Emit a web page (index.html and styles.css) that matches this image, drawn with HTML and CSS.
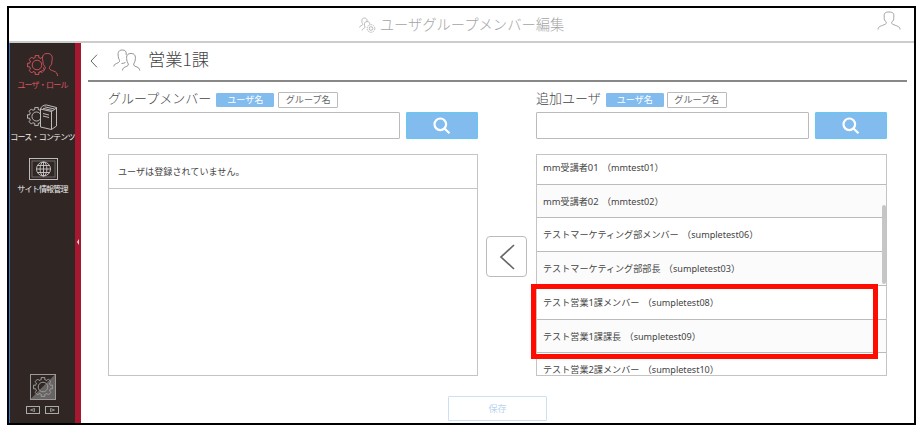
FILE: index.html
```html
<!DOCTYPE html>
<html lang="ja">
<head>
<meta charset="utf-8">
<title>ユーザグループメンバー編集</title>
<link rel="stylesheet" href="styles.css">
</head>
<body>
<svg class="defs" width="0" height="0">
  <symbol id="gear" viewBox="-10 -10 20 20"><path d="M7.400-1.700 9.410-1.900V1.900L7.400 1.700 6.500 4 8 5.300 5.300 8 4 6.500 1.700 7.400 1.900 9.410H-1.900L-1.700 7.400-4 6.500-5.300 8-8 5.300-6.500 4-7.400 1.700-9.410 1.900V-1.900L-7.400-1.700-6.500-4-8-5.300-5.300-8-4-6.500-1.700-7.400-1.900-9.410H1.900L1.700-7.400 4-6.500 5.300-8 8-5.300 6.500-4Z"/><circle r="4.800"/></symbol>
  <symbol id="person" viewBox="0 0 24 20"><path d="M1 18.500C1 15.500 3.500 15.300 7 13.800 9.600 12.800 10 12 8.700 10.400 7.600 10 7 8.200 7.300 6.500 6.500 2 8.500 1 12 1S17.500 2 16.700 6.500C17 8.200 16.400 10 15.300 10.400 14 12 14.400 12.800 17 13.800 20.500 15.300 23 15.500 23 18.500"/></symbol>
</svg>
<div class="app">
  <header class="top">
    <h1><svg class="top-icon" viewBox="0 0 17 16"><path d="M.5 10.500C.5 8.500 3.800 8.800 3.800 7.300 2.300 5 2.300 1 5.300 1S8.200 3.500 7.800 4.500M3 13.500C3 11.500 6.300 11.500 6 10 4.800 7 5.500 4.500 8 4.500S11 6 10.600 7.500"/><circle cx="12" cy="11.500" r="3.800" stroke-dasharray="1.700 .7"/><circle cx="12" cy="11.500" r="1.800"/></svg><span>ユーザグループメンバー編集</span></h1>
    <svg class="user" viewBox="0 0 24 20"><use href="#person"/></svg>
  </header>
  <div class="body">
    <nav class="side">
      <a class="item active"><svg width="32" height="26" viewBox="0 0 32 26"><use href="#gear" x="0" y="3" width="20" height="20"/><path class="cover" d="M13 24C14 20.500 19 19 18 17L15 12 15 5 20 1 26 7 25 15 24 18 30 24Z"/><path d="M12.500 20C16 18.500 19.500 17.500 18 14.500 16.500 13.500 15.800 12 16 9.500 14.800 5 15.500 1.500 20.300 1.500S26 5 24.800 9.500C25 12 24 13.500 22.700 14.500 21.700 17.500 23.500 18 26.500 19 29.500 20 30.500 21.500 30.500 24"/></svg><span>ユーザ・ロール</span></a>
      <a class="item"><svg width="32" height="26" viewBox="0 0 32 26"><use href="#gear" x="0" y="3" width="19" height="19"/><path class="cover" d="M13.500 5 18.500.8 30 2.800V21L25.500 25 13.500 25Z"/><path d="M13.500 5 24.500 7.500V25.500L13.500 23ZM24.500 7.500 29.500 4V22L24.500 25.500M13.500 5C14 2.500 17 .8 19.500 1L29.500 3.500V4M16 4.300 25.500 6.500M17.500 2.800 27.500 5M16 9.500 22 11M16 12 22 13.500"/></svg><span>コース・コンテンツ</span></a>
      <a class="item"><svg width="32" height="26" viewBox="0 0 32 26"><rect x="2.500" y="2.500" width="28" height="21"/><rect class="dim" x="5" y="5" width="23" height="16"/><circle cx="16.500" cy="13" r="7"/><ellipse cx="16.500" cy="13" rx="3.400" ry="7"/><path d="M16.500 6V20M9.500 13H23.500M10.500 9.500H22.500M10.500 16.500H22.500"/></svg><span>サイト情報管理</span></a>
      <div class="tools">
        <svg class="square" viewBox="0 0 26 26"><path class="half" d="M25.500 0V25.500H0Z"/><rect x=".5" y=".5" width="25" height="25"/><use href="#gear" x="3" y="3" width="20" height="20"/></svg>
        <div class="arrows">
          <svg viewBox="0 0 14 8"><rect x=".5" y=".5" width="13" height="7"/><path d="M8.500 2.500V5.500L4.500 4Z"/></svg>
          <svg viewBox="0 0 14 8"><rect x=".5" y=".5" width="13" height="7"/><path d="M5.500 2.500V5.500L9.500 4Z"/></svg>
        </div>
      </div>
    </nav>
    <div class="rail"><i></i></div>
    <main>
      <div class="heading">
        <svg class="back" viewBox="0 0 8 14"><path d="M7 .7 1 7 7 13.300"/></svg>
        <svg class="people" viewBox="0 0 28 23"><path d="M.7 17.500C.7 14.500 5.500 14.500 6.500 12.500 7 11 5.300 10 5.300 7.500 4.500 3 6 1 9.300 1 12.500 1 13.500 2.500 13.200 6M8.500 14.500C10 14.500 11.500 14 12.500 13.500"/><path d="M9.500 21.500C9.500 17.500 14.500 18 15.300 16 15.700 14.500 14 13.500 13.800 11 13 6.500 14.500 4.500 18 4.500S23 6.500 22.200 11C22 13.500 20.300 14.500 20.700 16 21.500 18 26.700 17.500 26.700 21.500"/></svg>
        <h2>営業1課</h2>
      </div>
      <div class="columns">
        <section class="left">
          <div class="label"><h3>グループメンバー</h3><button class="tab on">ユーザ名</button><button class="tab">グループ名</button></div>
          <div class="search"><input type="text"><button><svg viewBox="0 0 18 18"><circle cx="7.300" cy="7.300" r="5.800"/><path d="M11.500 11.500 16.500 16.300"/></svg></button></div>
          <div class="list"><p class="empty">ユーザは登録されていません。</p></div>
        </section>
        <button class="move"><svg viewBox="0 0 16 28"><path d="M15 2 2 14 15 26"/></svg></button>
        <section class="right">
          <div class="label"><h3>追加ユーザ</h3><button class="tab on">ユーザ名</button><button class="tab">グループ名</button></div>
          <div class="search"><input type="text"><button><svg viewBox="0 0 18 18"><circle cx="7.300" cy="7.300" r="5.800"/><path d="M11.500 11.500 16.500 16.300"/></svg></button></div>
          <div class="list-wrap">
            <ul class="list">
              <li><b>mm</b>受講者<b>01</b> <em>（<b>mmtest01</b>）</em></li>
              <li><b>mm</b>受講者<b>02</b> <em>（<b>mmtest02</b>）</em></li>
              <li>テストマーケティング部メンバー <em>（<b>sumpletest06</b>）</em></li>
              <li>テストマーケティング部部長 <em>（<b>sumpletest03</b>）</em></li>
              <li>テスト営業<b>1</b>課メンバー <em>（<b>sumpletest08</b>）</em></li>
              <li>テスト営業<b>1</b>課課長 <em>（<b>sumpletest09</b>）</em></li>
              <li>テスト営業<b>2</b>課メンバー <em>（<b>sumpletest10</b>）</em></li>
            </ul>
            <span class="thumb"></span>
            <span class="mark"></span>
          </div>
        </section>
      </div>
      <button class="save">保存</button>
    </main>
  </div>
</div>
</body>
</html>
```
FILE: styles.css
```css
* { box-sizing: border-box; margin: 0; padding: 0; }
body {
  width: 923px; height: 430px; padding: 6px 7px; overflow: hidden;
  background: #fff; color: #444;
  font: 9.1px/1 "Noto Sans", "Noto Sans CJK JP", sans-serif;
}
.defs { position: absolute; }
svg { display: block; flex: none; fill: none; stroke: currentColor; }
h1, h2, h3 { font-weight: 300; font-family: "Noto Sans CJK JP", sans-serif; white-space: nowrap; }
button { font: inherit; color: inherit; background: #fff; }

.app {
  width: 909px; height: 419px; border: 2px solid #000;
  display: flex; flex-direction: column;
}
.top {
  height: 35px; flex: none; border-bottom: 2px solid #ccc;
  display: flex; align-items: center; position: relative; justify-content: center;
}
h1 { display: flex; align-items: center; gap: 4px; font-size: 14.3px; color: #a4a4a4; }
h1 span { padding-bottom: 1px; }
.top-icon { width: 17px; height: 16px; color: #aaa; stroke-width: .8; }
.user { position: absolute; right: 13px; top: 3px; width: 24px; height: 20px; color: #999; stroke-width: .9; }

.body { flex: 1; display: flex; min-height: 0; }
.side {
  width: 66px; border-left: 1px solid #347bc4; background: #302725; color: #eee;
  display: flex; flex-direction: column; align-items: center; padding-top: 11px; margin-top: -2px;
}
.item { height: 52px; width: 66px; display: flex; flex-direction: column; align-items: center; gap: 2px; }
.item svg { stroke-width: .9; color: #ccc; }
.item span { font-size: 8px; line-height: 10px; letter-spacing: -.8px; white-space: nowrap; }
.item.active, .item.active svg { color: #dc5560; }
.item .cover { fill: #302725; stroke: none; }
.dim { opacity: .45; }
.tools { margin-top: auto; padding-bottom: 9px; display: flex; flex-direction: column; align-items: center; gap: 6px; color: #999; }
.square { width: 26px; height: 26px; }
.half { fill: #686463; stroke: none; }
.arrows { display: flex; gap: 5px; }
.arrows svg { width: 14px; height: 8px; color: #aaa; }
.arrows path { stroke-width: .8; }
.rail { width: 6px; background: #a5182f; margin-top: -2px; display: flex; align-items: center; justify-content: center; }
.rail i { border: 3px solid transparent; border-left: 0; border-right: 2.5px solid #ddd; margin-top: 20px; }

main { flex: 1; min-width: 0; display: flex; flex-direction: column; }
.heading {
  height: 39px; margin: 0 7px; border-bottom: 2px solid #888; color: #666;
  display: flex; align-items: center; padding: 0 0 2px 2px;
}
.back { width: 8px; height: 14px; }
.people { width: 28px; height: 23px; margin-left: 15px; color: #888; stroke-width: .9; }
h2 { font-size: 17.3px; margin-left: 7px; color: #444; padding-bottom: 3px; }
.columns { display: flex; padding-left: 27px; margin-top: 10px; height: 284px; flex: none; }
.left { width: 370px; }
.right { width: 351px; }
.label { height: 16px; display: flex; align-items: center; }
h3 { font-size: 13px; color: #444; padding-bottom: 5px; }
.tab {
  height: 16px; width: 60px; border: 1px solid #bbb; border-radius: 1px; margin-left: 4px;
  display: flex; align-items: center; justify-content: center; white-space: nowrap; color: #666;
}
.tab.on { height: 14px; width: 58px; margin-left: 5px; background: #82bcef; border-color: #82bcef; color: #fff; }
.right .tab:last-child { margin-left: 3px; }
.search { display: flex; gap: 6px; height: 27px; margin-top: 4px; }
.search input { flex: 1; min-width: 0; border: 1px solid #bbb; border-radius: 1px; }
.search button {
  width: 72px; border: 1px solid #62caf0; border-radius: 1px; background: #82bcef; color: #fff;
  display: flex; align-items: center; justify-content: center;
}
.search svg { width: 18px; height: 18px; stroke-width: 2.2; }
.list { height: 222px; margin-top: 15px; border: 1px solid #c4c4c4; overflow: hidden; list-style: none; }
.empty { height: 34px; line-height: 33px; padding-left: 9px; border-bottom: 1px solid #c4c4c4; }
.list-wrap { position: relative; }
.list li {
  height: 33.8px; border-bottom: 1px solid #bbb; padding-left: 6px; line-height: 33px;
  white-space: nowrap;
}
.list li:first-child { margin-top: -4.300px; }
.list li:nth-child(even) { background: #fbfbfb; }
b { font-weight: 400; font-size: 9.400px; }
em { font-style: normal; margin-left: 1px; }
em b { font-size: 9.100px; }
.thumb { position: absolute; right: 1px; top: 51px; width: 4px; height: 79px; border-radius: 2px; background: #c6c6c6; }
.mark { position: absolute; left: -5px; top: 130px; width: 347px; height: 75px; border: 5px solid #ff0b00; }
.move {
  width: 41px; height: 41px; margin: 144px 9px 0 8px; border: 1px solid #bbb; border-radius: 4px; flex: none;
  display: flex; align-items: center; justify-content: center; color: #666;
}
.move svg { width: 16px; height: 28px; stroke-width: 1.7; }
.save {
  width: 99px; height: 25px; margin: 20px 0 0 367px; flex: none;
  border: 1px solid #cce0f5; color: #b9d5ee; border-radius: 1px;
}
```
